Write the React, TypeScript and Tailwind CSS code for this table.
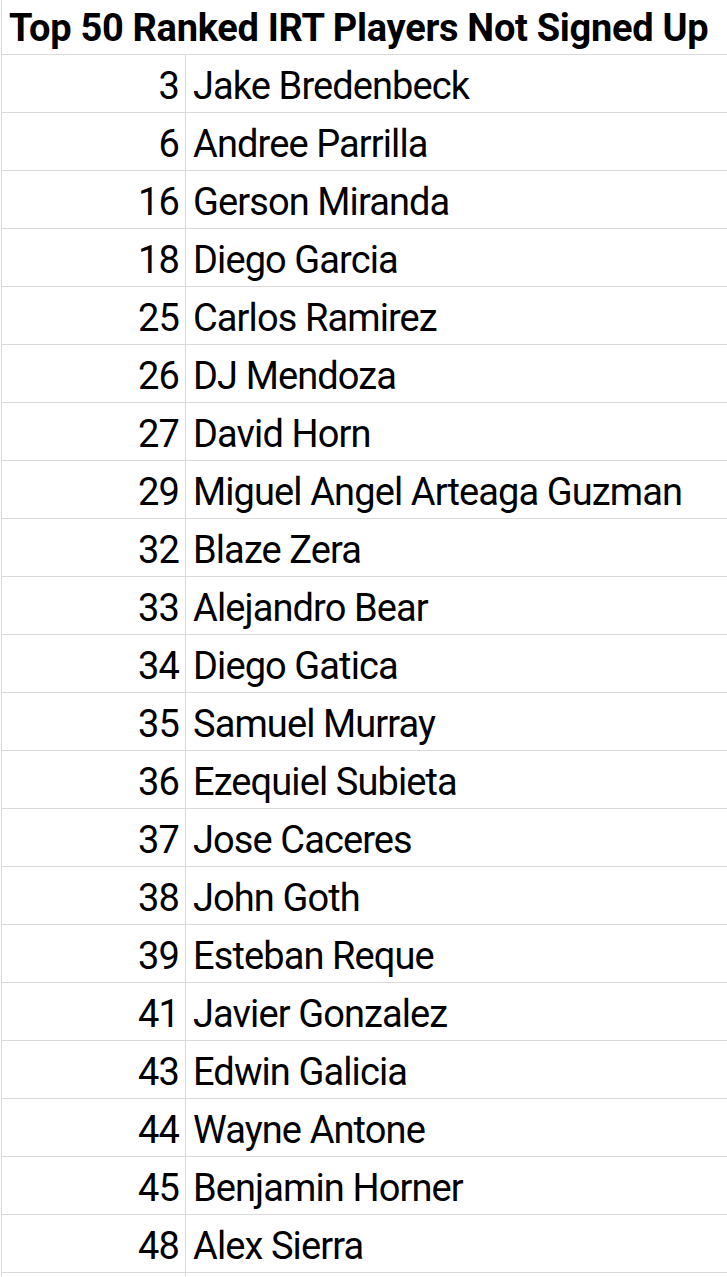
import React from "react";

const rows: [number, string][] = [
  [3, "Jake Bredenbeck"],
  [6, "Andree Parrilla"],
  [16, "Gerson Miranda"],
  [18, "Diego Garcia"],
  [25, "Carlos Ramirez"],
  [26, "DJ Mendoza"],
  [27, "David Horn"],
  [29, "Miguel Angel Arteaga Guzman"],
  [32, "Blaze Zera"],
  [33, "Alejandro Bear"],
  [34, "Diego Gatica"],
  [35, "Samuel Murray"],
  [36, "Ezequiel Subieta"],
  [37, "Jose Caceres"],
  [38, "John Goth"],
  [39, "Esteban Reque"],
  [41, "Javier Gonzalez"],
  [43, "Edwin Galicia"],
  [44, "Wayne Antone"],
  [45, "Benjamin Horner"],
  [48, "Alex Sierra"],
  [0, ""],
];

export default function App() {
  return (
    <div
      className="w-[727px] h-[1277px] overflow-hidden bg-white text-black"
      style={{ fontFamily: "Roboto, 'Liberation Sans', sans-serif" }}
    >
      <div className="ml-px border-l border-[#dadada]">
        <div className="h-[55px] border-b border-[#dadada] flex items-center pl-[7px] pt-[2px] text-[38px] font-bold tracking-[-0.3px] leading-none whitespace-nowrap">
          Top 50 Ranked IRT Players Not Signed Up
        </div>
        {rows.map(([n, name], i) => (
          <div key={i} className="flex h-[58px] border-b border-[#dadada]">
            <div className="w-[184px] shrink-0 border-r border-[#dadada] flex items-center justify-end pr-[6px] pt-[4px] text-[38px] tracking-[-0.9px] leading-none">
              {n ? n : ""}
            </div>
            <div className="flex-1 flex items-center pl-[7px] pt-[4px] text-[38px] tracking-[-0.9px] leading-none whitespace-nowrap">
              {name}
            </div>
          </div>
        ))}
      </div>
    </div>
  );
}
